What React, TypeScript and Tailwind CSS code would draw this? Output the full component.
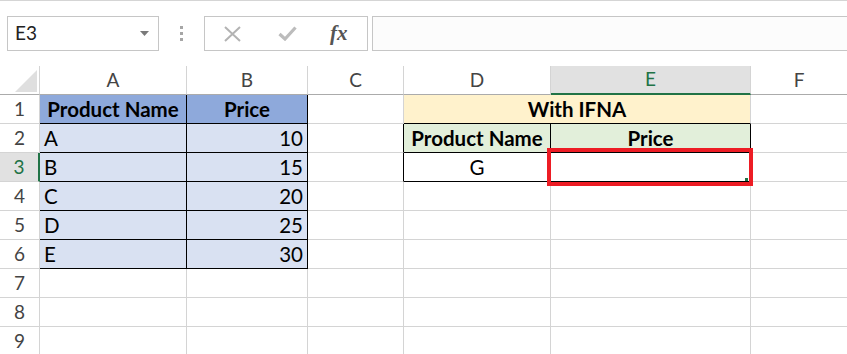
import React from "react";

const G = "border-r border-b border-[#d4d4d4]";

function RH({ n, active }: { n: number; active?: boolean }) {
  return (
    <div
      className={
        active
          ? "flex items-center justify-center border-b border-[#d4d4d4] border-r-2 border-r-[#217346] bg-[#e1e1e1] text-[#217346] text-[19px]"
          : "flex items-center justify-center border-r border-b border-[#d4d4d4] text-[#444] text-[19px]"
      }
    >
      {n}
    </div>
  );
}

export default function App() {
  return (
    <div
      className="w-[847px] h-[354px] overflow-hidden bg-white relative"
      style={{ fontFamily: "Lato, 'Liberation Sans', sans-serif" }}
    >
      {/* Formula bar */}
      <div className="h-[66px] border-t border-[#d5d5d5] pt-[15px] flex items-start">
        <div className="ml-[7px] w-[152px] h-[35px] border border-[#c6c6c6] flex items-center justify-between pl-[7px] pr-[9px]">
          <span className="text-[19px] text-[#222]">E3</span>
          <svg width="9" height="5" viewBox="0 0 9 5">
            <path d="M0 0 L9 0 L4.5 5 Z" fill="#7a7a7a" />
          </svg>
        </div>
        <div className="w-[45px] h-[35px] flex flex-col items-center justify-center gap-[3px]">
          <div className="w-[3px] h-[3px] bg-[#a6a6a6]" />
          <div className="w-[3px] h-[3px] bg-[#a6a6a6]" />
          <div className="w-[3px] h-[3px] bg-[#a6a6a6]" />
        </div>
        <div className="w-[164px] h-[35px] border border-[#c6c6c6] flex items-center">
          <svg className="ml-[19px]" width="17" height="16" viewBox="0 0 17 16">
            <path d="M1 1 L16 15 M16 1 L1 15" stroke="#b3b3b3" strokeWidth="2" fill="none" />
          </svg>
          <svg className="ml-[37px]" width="19" height="15" viewBox="0 0 19 15">
            <path d="M1.5 8 L7 13 L17.5 1.5" stroke="#bcbcbc" strokeWidth="3.2" fill="none" />
          </svg>
          <span
            className="ml-[33px] text-[21px] italic font-bold text-[#555]"
            style={{ fontFamily: "'Liberation Serif', 'DejaVu Serif', serif" }}
          >
            fx
          </span>
        </div>
        <div className="ml-[4px] flex-1 h-[35px] border-y border-l border-[#c6c6c6] bg-[#fcfcfc]" />
      </div>

      {/* Grid */}
      <div className="grid grid-cols-[40px_147px_121px_96px_147px_200px_97px] auto-rows-[29px] text-black text-[20.5px]">
        {/* header row */}
        <div className="relative border-r border-b border-[#d4d4d4] border-b-[#ababab]">
          <svg className="absolute left-[15px] top-[4px]" width="22" height="22" viewBox="0 0 22 22">
            <path d="M22 0 L22 22 L0 22 Z" fill="#dfdfdf" />
          </svg>
        </div>
        <div className="flex items-center justify-center border-r border-b border-[#d4d4d4] border-b-[#ababab] text-[#444] text-[19px]">A</div>
        <div className="flex items-center justify-center border-r border-b border-[#d4d4d4] border-b-[#ababab] text-[#444] text-[19px]">B</div>
        <div className="flex items-center justify-center border-r border-b border-[#d4d4d4] border-b-[#ababab] text-[#444] text-[19px]">C</div>
        <div className="flex items-center justify-center border-r border-b border-[#d4d4d4] border-b-[#ababab] text-[#444] text-[19px]">D</div>
        <div className="flex items-center justify-center border-r border-[#d4d4d4] border-b-2 border-b-[#217346] bg-[#e1e1e1] text-[#217346] text-[19px]">E</div>
        <div className="flex items-center justify-center border-r border-b border-[#d4d4d4] border-b-[#ababab] text-[#444] text-[19px]">F</div>

        {/* row 1 */}
        <RH n={1} />
        <div className="flex items-center justify-center font-bold bg-[#8ea9db] border-r border-b border-black">Product Name</div>
        <div className="flex items-center justify-center font-bold bg-[#8ea9db] border-r border-b border-black">Price</div>
        <div className={G} />
        <div className="col-span-2 flex items-center justify-center font-bold bg-[#fff2cc] border-r border-b border-[#d4d4d4] border-b-black">With IFNA</div>
        <div className={G} />

        {/* row 2 */}
        <RH n={2} />
        <div className="flex items-center pl-[4px] bg-[#d9e1f2] border-r border-b border-black">A</div>
        <div className="flex items-center justify-end pr-[4px] bg-[#d9e1f2] border-r border-b border-black">10</div>
        <div className="border-r border-b border-[#d4d4d4] border-r-black" />
        <div className="flex items-center justify-center font-bold bg-[#e2efda] border-r border-b border-black">Product Name</div>
        <div className="flex items-center justify-center font-bold bg-[#e2efda] border-r border-b border-black">Price</div>
        <div className={G} />

        {/* row 3 */}
        <RH n={3} active />
        <div className="flex items-center pl-[4px] bg-[#d9e1f2] border-r border-b border-black">B</div>
        <div className="flex items-center justify-end pr-[4px] bg-[#d9e1f2] border-r border-b border-black">15</div>
        <div className="border-r border-b border-[#d4d4d4] border-r-black" />
        <div className="flex items-center justify-center border-r border-b border-black">G</div>
        <div className="border-r border-b border-black" />
        <div className={G} />

        {/* row 4 */}
        <RH n={4} />
        <div className="flex items-center pl-[4px] bg-[#d9e1f2] border-r border-b border-black">C</div>
        <div className="flex items-center justify-end pr-[4px] bg-[#d9e1f2] border-r border-b border-black">20</div>
        <div className={G} />
        <div className={G} />
        <div className={G} />
        <div className={G} />

        {/* row 5 */}
        <RH n={5} />
        <div className="flex items-center pl-[4px] bg-[#d9e1f2] border-r border-b border-black">D</div>
        <div className="flex items-center justify-end pr-[4px] bg-[#d9e1f2] border-r border-b border-black">25</div>
        <div className={G} />
        <div className={G} />
        <div className={G} />
        <div className={G} />

        {/* row 6 */}
        <RH n={6} />
        <div className="flex items-center pl-[4px] bg-[#d9e1f2] border-r border-b border-black">E</div>
        <div className="flex items-center justify-end pr-[4px] bg-[#d9e1f2] border-r border-b border-black">30</div>
        <div className={G} />
        <div className={G} />
        <div className={G} />
        <div className={G} />

        {[7, 8, 9].map((n) => (
          <React.Fragment key={n}>
            <RH n={n} />
            <div className={G} />
            <div className={G} />
            <div className={G} />
            <div className={G} />
            <div className={G} />
            <div className={G} />
          </React.Fragment>
        ))}
      </div>

      {/* red highlight over E3 */}
      <div className="absolute left-[547px] top-[148px] w-[206px] h-[38px] border-[4px] border-[#ed1c24]">
        <div className="absolute right-[1px] bottom-[1px] w-[3px] h-[3px] bg-[#217346]" />
      </div>
    </div>
  );
}
